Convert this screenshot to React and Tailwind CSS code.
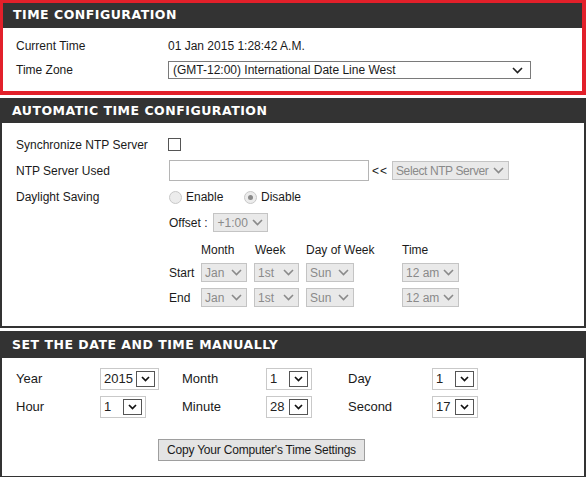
import React from 'react';

const Chevron = ({ color = '#333', w = 11 }) => (
  <svg width={w} height="7" viewBox="0 0 11 7" className="shrink-0">
    <path d="M1 1 L5.5 5.5 L10 1" fill="none" stroke={color} strokeWidth="1.6" />
  </svg>
);

// disabled grey select used in automatic section
const GraySelect = ({ value, width, tight }) => (
  <div
    className={`h-[19px] border border-[#c4c4c4] bg-[#e9e9e9] flex items-center justify-between pl-[3px] pr-[4px] text-[#8a8a8a] whitespace-nowrap overflow-hidden ${tight ? 'tracking-[-0.4px]' : ''}`}
    style={{ width }}
  >
    <span>{value}</span>
    <Chevron color="#8a8a8a" />
  </div>
);

// manual section select: light frame, value, small boxed chevron
const BoxSelect = ({ value, wide }) => (
  <div className={`${wide ? 'w-[59px]' : 'w-[46px]'} h-[22px] border border-[#c9c9c9] bg-white flex items-center justify-between pl-[3px] pr-[3px]`}>
    <span className="text-[13px] text-[#222]">{value}</span>
    <div className="w-[19px] h-[16px] border border-[#555] flex items-center justify-center">
      <svg width="9" height="6" viewBox="0 0 9 6">
        <path d="M1 1 L4.5 4.5 L8 1" fill="none" stroke="#111" strokeWidth="1.7" />
      </svg>
    </div>
  </div>
);

const Header = ({ children, h = 'h-[25px]' }) => (
  <div className={`${h} bg-[#333333] text-white font-bold text-[12.5px] tracking-[0.5px] flex items-center pl-[10px]`} style={{ fontFamily: '"DejaVu Sans", Verdana, sans-serif' }}>
    {children}
  </div>
);

const Radio = ({ checked }) => (
  <div className="w-[13px] h-[13px] rounded-full border border-[#c8c8c8] bg-[#ececec] flex items-center justify-center">
    {checked && <div className="w-[5px] h-[5px] rounded-full bg-[#8a8a8a]" />}
  </div>
);

export default function App() {
  return (
    <div className="w-[586px] h-[477px] bg-white text-[12px] text-[#1a1a1a] overflow-hidden" style={{ fontFamily: '"Liberation Sans", Arial, sans-serif' }}>
      {/* TIME CONFIGURATION */}
      <div className="border-t-[3px] border-l-[3px] border-r-[4px] border-b-[4px] border-[#e2202a] h-[95px]">
        <Header>TIME CONFIGURATION</Header>
        <div className="pt-[6px]">
          <div className="h-[24px] flex items-center">
            <div className="w-[165px] pl-[13px]">Current Time</div>
            <div>01 Jan 2015 1:28:42 A.M.</div>
          </div>
          <div className="h-[24px] flex items-center">
            <div className="w-[165px] pl-[13px]">Time Zone</div>
            <div className="w-[363px] h-[18px] border border-[#7a7a7a] flex items-center justify-between pl-[4px] pr-[7px]">
              <span>(GMT-12:00) International Date Line West</span>
              <Chevron color="#222" />
            </div>
          </div>
        </div>
      </div>

      {/* AUTOMATIC TIME CONFIGURATION */}
      <div className="mt-[3px] border-2 border-[#333333] h-[230px]">
        <Header h="h-[23px]">AUTOMATIC TIME CONFIGURATION</Header>
        <div className="pt-[9px]">
          <div className="h-[25px] flex items-center">
            <div className="w-[166px] pl-[14px]">Synchronize NTP Server</div>
            <div className="w-[13px] h-[13px] border border-[#555] bg-white" />
          </div>
          <div className="h-[27px] flex items-center">
            <div className="w-[167px] pl-[14px]">NTP Server Used</div>
            <div className="w-[200px] h-[21px] border border-[#b5b5b5] bg-white" />
            <span className="ml-[3px] mr-[4px] tracking-[1px]">&lt;&lt;</span>
            <GraySelect value="Select NTP Server" width={117} tight />
          </div>
          <div className="h-[26px] flex items-center">
            <div className="w-[167px] pl-[14px]">Daylight Saving</div>
            <Radio />
            <span className="ml-[4px] w-[58px]">Enable</span>
            <Radio checked />
            <span className="ml-[4px]">Disable</span>
          </div>
          <div className="h-[25px] flex items-center">
            <div className="w-[167px]" />
            <span>Offset :</span>
            <div className="ml-[6px]">
              <GraySelect value="+1:00" width={55} />
            </div>
          </div>
          <div className="h-[25px] flex items-end pb-[3px] leading-[14px]">
            <div className="w-[199px]" />
            <div className="w-[54px]">Month</div>
            <div className="w-[51px]">Week</div>
            <div className="w-[96px]">Day of Week</div>
            <div>Time</div>
          </div>
          {['Start', 'End'].map((r) => (
            <div key={r} className="h-[25px] flex items-center">
              <div className="w-[167px]" />
              <div className="w-[32px]">{r}</div>
              <div className="w-[53px]"><GraySelect value="Jan" width={46} /></div>
              <div className="w-[52px]"><GraySelect value="1st" width={45} /></div>
              <div className="w-[96px]"><GraySelect value="Sun" width={48} /></div>
              <GraySelect value="12 am" width={57} />
            </div>
          ))}
        </div>
      </div>

      {/* SET THE DATE AND TIME MANUALLY */}
      <div className="mt-[3px] border-2 border-[#333333] h-[147px]">
        <Header h="h-[25px]">SET THE DATE AND TIME MANUALLY</Header>
        <div className="pt-[7px]">
          {[
            [['Year', '2015'], ['Month', '1'], ['Day', '1']],
            [['Hour', '1'], ['Minute', '28'], ['Second', '17']],
          ].map((row, i) => (
            <div key={i} className="h-[28px] flex items-center text-[13px]">
              {row.map(([label, val], j) => (
                <div key={label} className={`flex items-center ${j === 2 ? '' : 'w-[166px]'}`}>
                  <div className="w-[98px] pl-[14px]">{label}</div>
                  <BoxSelect value={val} wide={label === 'Year'} />
                </div>
              ))}
            </div>
          ))}
          <div className="flex pt-[18px] pl-[156px]">
            <div className="h-[22px] px-[8px] border border-[#9e9e9e] bg-[#e4e4e4] flex items-center text-[12px] whitespace-nowrap tracking-[-0.2px]">
              Copy Your Computer's Time Settings
            </div>
          </div>
        </div>
      </div>
    </div>
  );
}
